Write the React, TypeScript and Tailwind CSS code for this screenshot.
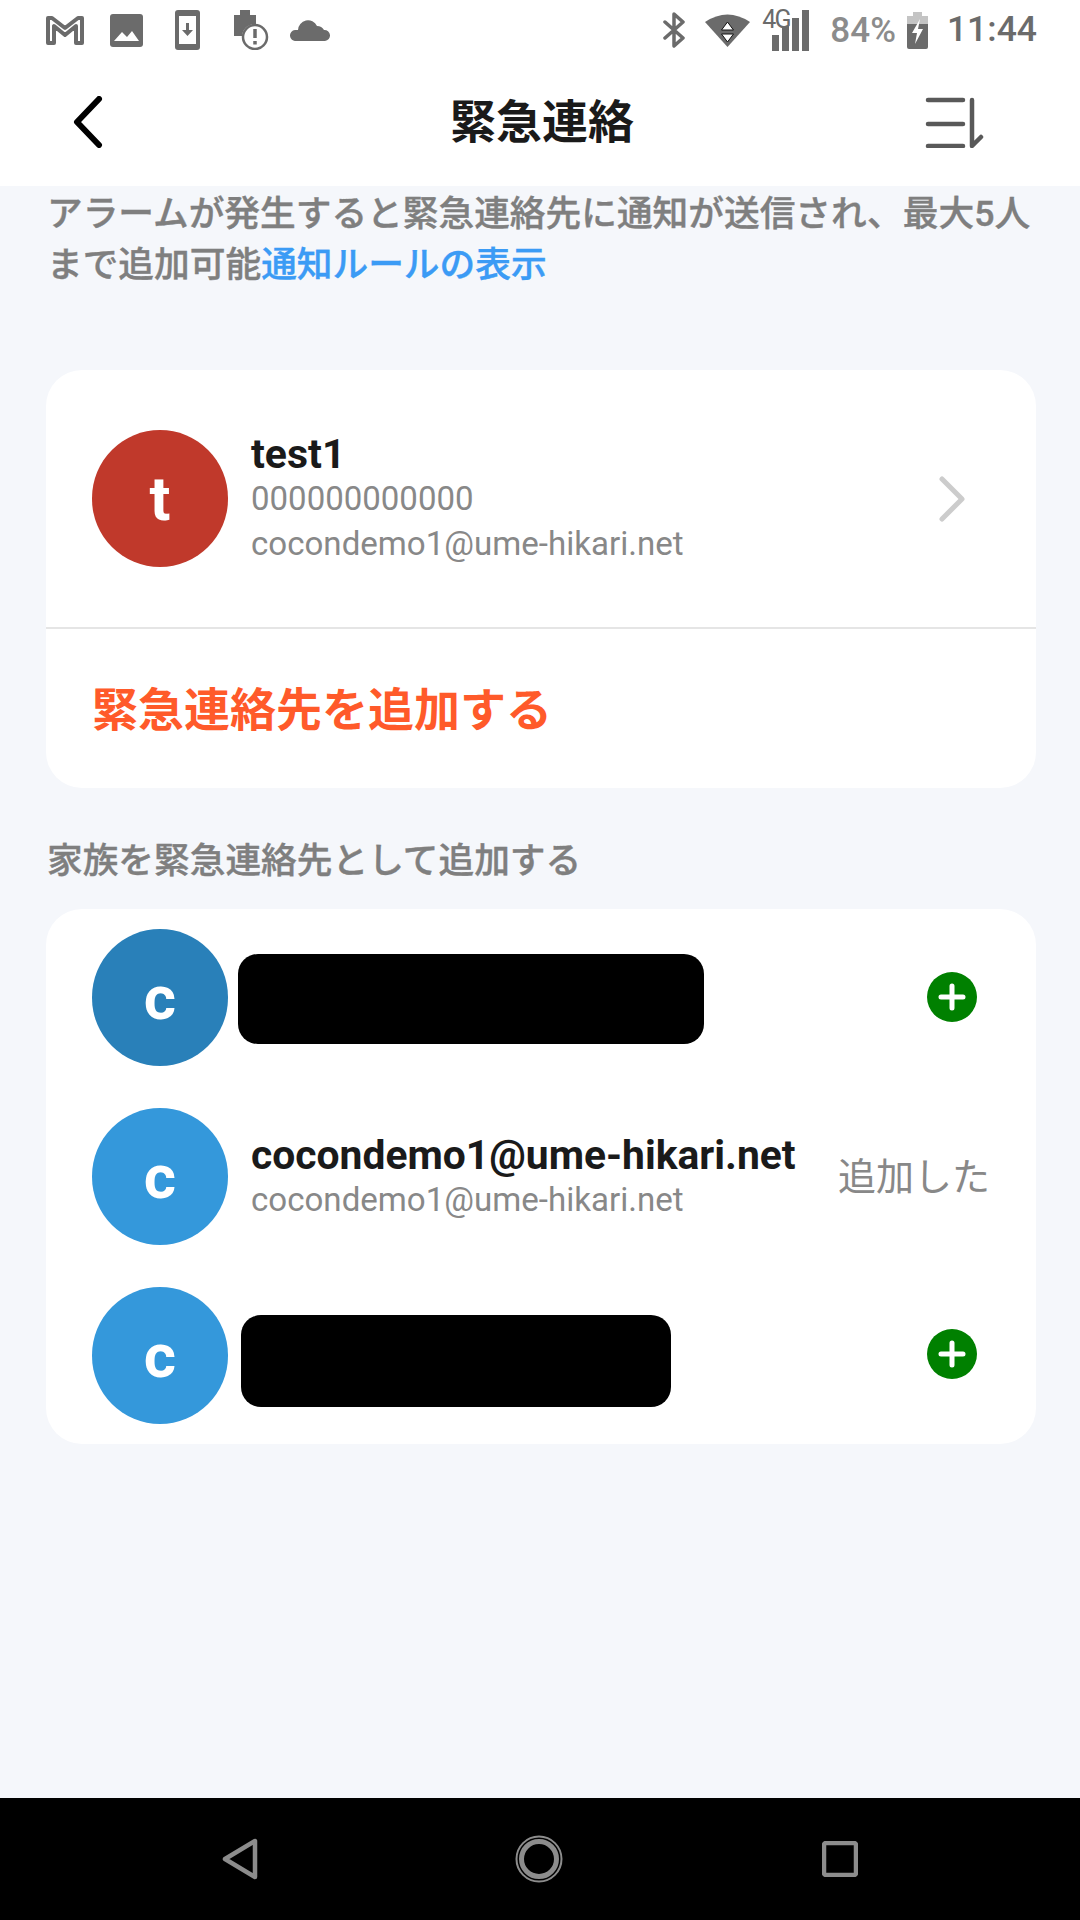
const font = "font-['Roboto','Noto_Sans_CJK_JP',sans-serif]"

function Avatar({ letter, color }: { letter: string; color: string }) {
  return (
    <div className={`flex h-[137px] w-[136px] flex-shrink-0 items-center justify-center rounded-full text-[62px] font-bold text-white ${color}`}>
      {letter}
    </div>
  )
}

function PlusBadge() {
  return (
    <svg width="50" height="50" viewBox="0 0 50 50" className="flex-shrink-0">
      <circle cx="25" cy="25" r="25" fill="#008000" />
      <path d="M25 14v22M14 25h22" stroke="#fff" strokeWidth="5" strokeLinecap="round" />
    </svg>
  )
}

function StatusBar() {
  return (
    <div className="flex h-[60px] items-center pl-[45px] pr-[43px]">
      {/* gmail */}
      <svg width="40" height="32" viewBox="0 0 40 32" className="mr-[25px]">
        <path d="M3 29V4h4l13 10L33 4h4v25h-6V12L20 21 9 12v17z" fill="none" stroke="#6b6b6b" strokeWidth="4" strokeLinejoin="round" />
      </svg>
      {/* image */}
      <svg width="33" height="33" viewBox="0 0 33 33" className="mr-[32px]">
        <rect width="33" height="33" rx="3" fill="#6b6b6b" />
        <path d="M4 27l8-9 5 5 5-6 7 10z" fill="#fff" />
      </svg>
      {/* phone download */}
      <svg width="25" height="40" viewBox="0 0 25 40" className="mr-[34px]">
        <rect width="25" height="40" rx="3" fill="#6b6b6b" />
        <rect x="4" y="6" width="17" height="28" fill="#fff" />
        <path d="M11 13h3v7h4l-5.500 6L7 20h4z" fill="#6b6b6b" />
      </svg>
      {/* battery alert */}
      <svg width="36" height="40" viewBox="0 0 36 40" className="mr-[20px]">
        <path d="M6 0h10v5h6v21H0V5h6z" fill="#6b6b6b" />
        <circle cx="21" cy="27" r="13" fill="#fff" />
        <circle cx="21" cy="27" r="12" fill="none" stroke="#6b6b6b" strokeWidth="2.500" />
        <path d="M21 19v9" stroke="#6b6b6b" strokeWidth="3.500" />
        <path d="M21 31v3.500" stroke="#6b6b6b" strokeWidth="3.500" />
      </svg>
      {/* cloud */}
      <svg width="41" height="22" viewBox="0 0 41 22">
        <path d="M6 22a5.500 5.500 0 0 1-1-11h3a10 10 0 0 1 19-4 8 8 0 0 1 7 4 5.500 5.500 0 0 1 1 11z" fill="#6b6b6b" />
      </svg>

      <div className="flex-1" />

      {/* bluetooth */}
      <svg width="23" height="36" viewBox="0 0 23 36" className="mr-[19px]">
        <path d="M2 10l18 16-9 8V2l9 8L2 26" fill="none" stroke="#6b6b6b" strokeWidth="3.500" strokeLinecap="round" strokeLinejoin="round" />
      </svg>
      {/* wifi */}
      <svg width="45" height="34" viewBox="0 0 45 34" className="mr-[12px]">
        <path d="M0 9Q22.500-6 45 9L22.500 34z" fill="#6b6b6b" />
        <path d="M22.500 9l6 8h-12zM22.500 29l-6-8h12z" fill="#fff" stroke="#111" strokeWidth="1" />
      </svg>
      {/* 4G signal */}
      <div className="relative mr-[21px] h-[41px] w-[47px]">
        <span className="absolute left-0 top-[-3px] text-[25px] leading-[26px] tracking-[-2px] text-[#6b6b6b]">4G</span>
        <div className="flex h-full items-end justify-end gap-[3px]">
          <div className="h-[16px] w-[7px] bg-[#6b6b6b]" />
          <div className="h-[25px] w-[7px] bg-[#6b6b6b]" />
          <div className="h-[33px] w-[7px] bg-[#6b6b6b]" />
          <div className="h-[41px] w-[7px] bg-[#6b6b6b]" />
        </div>
      </div>
      <span className="mr-[11px] text-[35px] font-medium leading-none text-[#8c8c8c]">84%</span>
      {/* battery */}
      <svg width="21" height="37" viewBox="0 0 21 37" className="mr-[19px]">
        <path d="M6 0h9v4h6v8H0V4h6z" fill="#c4c4c4" />
        <path d="M0 12h21v23a2 2 0 0 1-2 2H2a2 2 0 0 1-2-2z" fill="#6b6b6b" />
        <path d="M13 7L5 21h5l-2 11 8-15h-5z" fill="#fff" />
      </svg>
      <span className="text-[35.500px] font-medium leading-none text-[#6b6b6b]">11:44</span>
    </div>
  )
}

function Header() {
  return (
    <div className="flex h-[126px] items-center justify-between pb-[2px] pl-[73px] pr-[95px]">
      <svg width="30" height="52" viewBox="0 0 30 52">
        <path d="M26 3L4 26l22 23" fill="none" stroke="#000" strokeWidth="6" strokeLinecap="round" strokeLinejoin="round" />
      </svg>
      <h1 className="ml-[56px] text-[46px] font-bold leading-none text-[#1a1a1a]">緊急連絡</h1>
      <svg width="60" height="52" viewBox="0 0 60 52">
        <path d="M3 4h35M3 28h35M3 50h35M47 4v46l9-9" fill="none" stroke="#595959" strokeWidth="4.500" strokeLinecap="round" strokeLinejoin="round" />
      </svg>
    </div>
  )
}

export default function App() {
  return (
    <div className={`flex h-[1920px] w-[1080px] flex-col overflow-hidden bg-[#f5f7fb] ${font}`}>
      <div className="bg-white">
        <StatusBar />
        <Header />
      </div>

      <div className="flex-1 pl-[46px] pr-[44px]">
        <p className="pl-[1px] pt-[3px] text-[35.700px] font-medium leading-[51px] text-[#7f7f7f] [-webkit-text-stroke:0.4px]">
          アラームが発生すると緊急連絡先に通知が送信され、最大5人
          <br />
          まで追加可能<span className="text-[#3b9bf5]">通知ルールの表示</span>
        </p>

        <div className="mt-[79px] rounded-[36px] bg-white">
          <div className="flex h-[259px] items-center border-b-2 border-[#e5e5e5] pl-[46px] pr-[70px]">
            <Avatar letter="t" color="bg-[#c0392b]" />
            <div className="ml-[23px] flex-1">
              <p className="text-[41px] font-bold leading-[46px] text-[#1a1a1a]">test1</p>
              <p className="text-[33px] leading-[44px] text-[#888888]">000000000000</p>
              <p className="text-[33.100px] leading-[46px] text-[#888888]">cocondemo1@ume-hikari.net</p>
            </div>
            <svg width="28" height="46" viewBox="0 0 28 46">
              <path d="M4 3l20 20L4 43" fill="none" stroke="#cccccc" strokeWidth="5" strokeLinecap="round" strokeLinejoin="round" />
            </svg>
          </div>
          <div className="flex h-[159px] items-center pl-[46px] pt-[3px]">
            <span className="text-[46px] font-bold leading-none text-[#ff5a2a]">緊急連絡先を追加する</span>
          </div>
        </div>

        <p className="mt-[49px] pl-[1px] text-[35.700px] font-medium leading-[48px] text-[#7f7f7f] [-webkit-text-stroke:0.4px]">
          家族を緊急連絡先として追加する
        </p>

        <div className="mt-[24px] flex h-[535px] flex-col gap-[42px] rounded-[36px] bg-white pl-[46px] pr-[59px] pt-[20px]">
          <div className="flex items-center">
            <Avatar letter="c" color="bg-[#2980b9]" />
            <div className="ml-[10px] mt-[2px] h-[90px] w-[466px] rounded-[20px] bg-black" />
            <div className="flex-1" />
            <div className="-mt-[2px]"><PlusBadge /></div>
          </div>
          <div className="flex items-center">
            <Avatar letter="c" color="bg-[#3498db]" />
            <div className="ml-[23px] flex-1">
              <p className="whitespace-nowrap text-[40.800px] font-bold leading-[46px] text-[#1a1a1a]">cocondemo1@ume-hikari.net</p>
              <p className="text-[33.100px] leading-[44px] text-[#888888]">cocondemo1@ume-hikari.net</p>
            </div>
            <span className="-mr-[13px] text-[38px] leading-none text-[#888888]">追加した</span>
          </div>
          <div className="flex items-center">
            <Avatar letter="c" color="bg-[#3498db]" />
            <div className="ml-[13px] mt-[10px] h-[92px] w-[430px] rounded-[20px] bg-black" />
            <div className="flex-1" />
            <div className="-mt-[4px]"><PlusBadge /></div>
          </div>
        </div>
      </div>

      <div className="flex h-[122px] items-center justify-between bg-black pl-[222px] pr-[222px]">
        <svg width="36" height="42" viewBox="0 0 36 42">
          <path d="M33 3v36L3 21z" fill="none" stroke="#8c8c8c" strokeWidth="4.500" strokeLinejoin="round" />
        </svg>
        <svg width="48" height="48" viewBox="0 0 48 48" className="-ml-[2px]">
          <circle cx="24" cy="24" r="22.500" fill="none" stroke="#8c8c8c" strokeWidth="2" />
          <circle cx="24" cy="24" r="17.500" fill="none" stroke="#8c8c8c" strokeWidth="5" />
        </svg>
        <svg width="36" height="36" viewBox="0 0 36 36">
          <rect x="2" y="2" width="32" height="32" rx="2" fill="none" stroke="#8c8c8c" strokeWidth="4.500" />
        </svg>
      </div>
    </div>
  )
}
